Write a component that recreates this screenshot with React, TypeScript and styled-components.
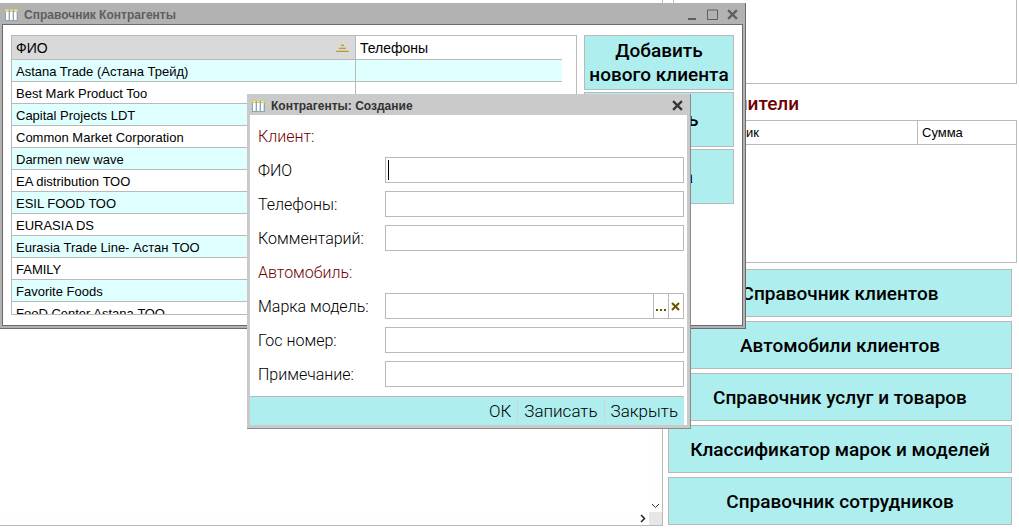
import React from 'react';
import styled, { createGlobalStyle } from 'styled-components';

const ui = '"Liberation Sans", Arial, sans-serif';
const light = 'Roboto, "Liberation Sans", sans-serif';
const line = '#b9b9b9';
const aqua = '#afeeee';

const GlobalStyle = createGlobalStyle`
  *, *::before, *::after { box-sizing: border-box; }
  body {
    margin: 0;
    background: #fff;
    color: #000;
    font-family: ${ui};
    font-size: 13px;
  }
  button, input { font: inherit; color: inherit; border-radius: 0; }
  button { padding: 0; }
`;

const Desktop = styled.div`
  position: relative;
  display: grid;
  grid-template-columns: minmax(0, 1fr) 356px;
  min-height: 100vh;
  padding-bottom: 3px;
  overflow: hidden;
`;

const Journal = styled.section`
  display: grid;
  grid-template-columns: minmax(0, 1fr) 13px;
  grid-template-rows: minmax(0, 1fr) 13px;
  border-right: 1px solid ${line};
  border-bottom: 1px solid ${line};
`;

const JournalBody = styled.div`
  grid-column: 1;
`;

const ScrollTrack = styled.div<{ $vertical?: boolean }>`
  display: flex;
  justify-content: flex-end;
  align-items: center;
  flex-direction: ${(p) => (p.$vertical ? 'column' : 'row')};
  background: #fefefe;
`;

const ScrollButton = styled.button`
  display: flex;
  align-items: center;
  justify-content: center;
  width: 13px;
  height: 13px;
  border: 0;
  background: transparent;
`;

const ScrollCorner = styled.div`
  background: #e6e6e6;
`;

const Side = styled.aside`
  display: flex;
  flex-direction: column;
  padding: 0 2px 0 5px;
`;

const EmptyPanel = styled.div`
  height: 84px;
  margin-left: 5px;
  border: 1px solid ${line};
  border-top: 0;
`;

const SideHeading = styled.h2`
  margin: 0 0 0 5px;
  padding: 4px 0 0 8px;
  font: 500 19px/32px ${light};
  color: #700000;
`;

const PanelTable = styled.div`
  height: 143px;
  margin: 0 0 6px 5px;
  border: 1px solid ${line};
`;

const Table = styled.table`
  width: 100%;
  table-layout: fixed;
  border-collapse: separate;
  border-spacing: 0;
`;

const PanelHead = styled.th<{ $w?: number }>`
  width: ${(p) => (p.$w ? `${p.$w}px` : 'auto')};
  height: 24px;
  padding: 0 4px;
  border-bottom: 1px solid ${line};
  font-weight: 400;
  text-align: left;

  & + & { border-left: 1px solid ${line}; }
`;

const Menu = styled.nav`
  display: flex;
  flex-direction: column;
  gap: 4px;
  margin-right: 5px;
`;

const ActionButton = styled.button<{ $tall?: boolean }>`
  height: ${(p) => (p.$tall ? 55 : 48)}px;
  padding-top: ${(p) => (p.$tall ? 0 : 2)}px;
  border: 1px solid ${line};
  background: ${aqua};
  font: 500 19px/24px ${light};
  white-space: nowrap;
`;

const ListWindow = styled.section`
  position: absolute;
  left: 0;
  top: 3px;
  width: 746px;
  padding: 0 2px 2px;
  border: solid #6b6b6b;
  border-width: 0 1px 1px 0;
  background: #b2b2b2;
`;

const Titlebar = styled.header<{ $active?: boolean }>`
  display: flex;
  align-items: center;
  height: 21px;
  padding: ${(p) => (p.$active ? '2px 0 0 2px' : '2px 1px 0 3px')};
  color: ${(p) => (p.$active ? '#333' : '#5e5e5e')};
`;

const Title = styled.h1`
  flex: 1;
  margin: 0 0 0 6px;
  font: 700 12px/18px ${ui};
`;

const WindowButton = styled.button`
  display: flex;
  align-items: center;
  justify-content: center;
  width: 20px;
  height: 18px;
  border: 0;
  background: transparent;
`;

const ListContent = styled.div`
  display: grid;
  grid-template-columns: minmax(0, 1fr) 150px;
  gap: 7px;
  height: 302px;
  padding: 10px 8px;
  border: 1px solid #6b6b6b;
  background: #fff;
`;

const ListFrame = styled.div`
  overflow: hidden;
  padding-right: 14px;
  border: 1px solid ${line};
`;

const ListHead = styled.th<{ $sorted?: boolean }>`
  width: ${(p) => (p.$sorted ? '343px' : 'auto')};
  height: 24px;
  padding: 0 4px;
  border-bottom: 1px solid ${line};
  background: ${(p) => (p.$sorted ? '#d9d9d9' : '#fff')};
  font-size: 14px;
  font-weight: 400;
  text-align: left;

  & + & { border-left: 1px solid ${line}; }
`;

const HeadLabel = styled.span`
  display: flex;
  align-items: center;
  justify-content: space-between;
  padding-right: 2px;
`;

const ListRow = styled.tr`
  &:nth-child(odd) { background: #e0ffff; }
`;

const ListCell = styled.td`
  height: 22px;
  padding: 2px 4px 0;
  border-bottom: 1px solid ${line};
  line-height: 19px;
  white-space: nowrap;

  & + & { border-left: 1px solid ${line}; }
`;

const ListActions = styled.div`
  display: flex;
  flex-direction: column;
  gap: 2px;
`;

const Dialog = styled.form`
  position: absolute;
  left: 247px;
  top: 94px;
  width: 444px;
  padding: 0 3px 3px;
  border: solid #8a8a8a;
  border-width: 0 1px 1px 0;
  background: #cacaca;
`;

const DialogContent = styled.div`
  padding: 4px 3px 0 0;
  background: #fff;
`;

const Fields = styled.div`
  display: grid;
  grid-auto-rows: 34px;
  align-items: center;
  padding: 0 0 5px 8px;
`;

const GroupTitle = styled.h2`
  margin: 0;
  padding-top: 2px;
  font: 300 16px/24px ${light};
  color: #700000;
`;

const FieldRow = styled.div`
  display: grid;
  grid-template-columns: 127px minmax(0, 1fr);
  align-items: center;
`;

const FieldLabel = styled.label`
  padding-top: 2px;
  font: 300 16px/24px ${light};
`;

const InputFrame = styled.div`
  display: flex;
  height: 26px;
  border: 1px solid ${line};
  background: #fff;
`;

const Input = styled.input`
  flex: 1;
  min-width: 0;
  padding: 0 2px;
  border: 0;
  outline: 0;
  background: transparent;
  font-size: 16px;
`;

const Caret = styled.span`
  width: 1px;
  margin: 2px 0 2px 2px;
  background: #000;
`;

const FieldButton = styled.button`
  display: flex;
  align-items: center;
  justify-content: center;
  width: 15px;
  border: 0;
  border-left: 1px solid ${line};
  background: #fff;
`;

const DialogFooter = styled.footer`
  display: flex;
  justify-content: flex-end;
  align-items: center;
  height: 29px;
  border-top: 1px solid ${line};
  background: ${aqua};
`;

const FooterButton = styled.button`
  height: 22px;
  padding: 0 6px;
  border: 0;
  background: transparent;
  font: 300 17px/22px ${light};

  & + & { border-left: 1px solid #d8d0d0; }
`;

const TableIcon = () => (
  <svg width="13" height="12" viewBox="0 0 13 12" aria-hidden="true">
    <path d="M0 1h13v11H0z" fill="#8ea3b4" />
    <path d="M1 3h3v8H1zM5 3h3v8H5zM9 3h3v8H9z" fill="#fff" />
    <path d="M3 3h1v8H3zM7 3h1v8H7zM11 3h1v8h-1z" fill="#cfe0ee" />
    <path d="M0 0h4v3H0zM5 0h3v3H5zM9 0h4v3H9z" fill="#d5cb70" />
    <path d="M1 1h2v1H1zM5 1h2v1H5zM9 1h3v1H9z" fill="#f4ecaa" />
  </svg>
);

const SortIcon = () => (
  <svg width="13" height="8" viewBox="0 0 13 8" aria-hidden="true">
    <path d="M5 0h3v1H5zM3 3h7v1H3zM1 6h11v1H1z" fill="#d8c878" />
    <path d="M5 1h3v1H5zM3 4h7v1H3zM0 7h13v1H0z" fill="#b09a4c" />
  </svg>
);

const CrossIcon = ({ size }: { size: number }) => (
  <svg width={size} height={size} viewBox="0 0 10 10" aria-hidden="true">
    <path d="M1 1l8 8M9 1l-8 8" stroke="currentColor" strokeWidth="2" fill="none" />
  </svg>
);

const clients = [
  'Astana Trade (Астана Трейд)',
  'Best Mark Product Too',
  'Capital Projects LDT',
  'Common Market Corporation',
  'Darmen new wave',
  'EA distribution ТОО',
  'ESIL FOOD ТОО',
  'EURASIA DS',
  'Eurasia Trade Line- Астан ТОО',
  'FAMILY',
  'Favorite Foods',
  'FooD Center Astana ТОО',
];

const menuItems = [
  'Справочник клиентов',
  'Автомобили клиентов',
  'Справочник услуг и товаров',
  'Классификатор марок и моделей',
  'Справочник сотрудников',
];

type FieldProps = { id: string; label: string; caret?: boolean; children?: React.ReactNode };

const Field = ({ id, label, caret, children }: FieldProps) => (
  <FieldRow>
    <FieldLabel htmlFor={id}>{label}</FieldLabel>
    <InputFrame>
      {caret && <Caret />}
      <Input id={id} type="text" />
      {children}
    </InputFrame>
  </FieldRow>
);

export default function App() {
  return (
    <>
      <GlobalStyle />
      <Desktop>
        <Journal>
          <JournalBody />
          <ScrollTrack $vertical>
            <ScrollButton type="button" aria-label="Вниз">
              <svg width="9" height="6" viewBox="0 0 9 6"><path d="M1 1l3.5 3.5L8 1" fill="none" stroke="#333" /></svg>
            </ScrollButton>
          </ScrollTrack>
          <ScrollTrack>
            <ScrollButton type="button" aria-label="Вправо">
              <svg width="6" height="9" viewBox="0 0 6 9"><path d="M1 1l3.5 3.5L1 8" fill="none" stroke="#222" strokeWidth="1.5" /></svg>
            </ScrollButton>
          </ScrollTrack>
          <ScrollCorner />
        </Journal>

        <Side>
          <EmptyPanel />
          <SideHeading>Исполнители</SideHeading>
          <PanelTable>
            <Table>
              <thead>
                <tr>
                  <PanelHead $w={24}>N</PanelHead>
                  <PanelHead>Работник</PanelHead>
                  <PanelHead $w={99}>Сумма</PanelHead>
                </tr>
              </thead>
            </Table>
          </PanelTable>
          <Menu>
            {menuItems.map((item) => (
              <ActionButton key={item} type="button">{item}</ActionButton>
            ))}
          </Menu>
        </Side>

        <ListWindow>
          <Titlebar>
            <TableIcon />
            <Title>Справочник Контрагенты</Title>
            <WindowButton type="button" aria-label="Свернуть">
              <svg width="10" height="10" viewBox="0 0 10 10"><path d="M1 9h8" stroke="currentColor" strokeWidth="2" /></svg>
            </WindowButton>
            <WindowButton type="button" aria-label="Развернуть">
              <svg width="11" height="11" viewBox="0 0 11 11"><path d="M.5 1h10v9.500h-10z" fill="none" stroke="currentColor" /></svg>
            </WindowButton>
            <WindowButton type="button" aria-label="Закрыть окно"><CrossIcon size={11} /></WindowButton>
          </Titlebar>
          <ListContent>
            <ListFrame>
              <Table>
                <thead>
                  <tr>
                    <ListHead $sorted><HeadLabel>ФИО<SortIcon /></HeadLabel></ListHead>
                    <ListHead>Телефоны</ListHead>
                  </tr>
                </thead>
                <tbody>
                  {clients.map((name) => (
                    <ListRow key={name}>
                      <ListCell>{name}</ListCell>
                      <ListCell />
                    </ListRow>
                  ))}
                </tbody>
              </Table>
            </ListFrame>
            <ListActions>
              <ActionButton type="button" $tall>Добавить<br />нового клиента</ActionButton>
              <ActionButton type="button" $tall>Открыть</ActionButton>
              <ActionButton type="button" $tall>Отмена</ActionButton>
            </ListActions>
          </ListContent>
        </ListWindow>

        <Dialog>
          <Titlebar $active>
            <TableIcon />
            <Title>Контрагенты: Создание</Title>
            <WindowButton type="button" aria-label="Закрыть окно"><CrossIcon size={11} /></WindowButton>
          </Titlebar>
          <DialogContent>
            <Fields>
              <GroupTitle>Клиент:</GroupTitle>
              <Field id="name" label="ФИО" caret />
              <Field id="phones" label="Телефоны:" />
              <Field id="comment" label="Комментарий:" />
              <GroupTitle>Автомобиль:</GroupTitle>
              <Field id="model" label="Марка модель:">
                <FieldButton type="button" aria-label="Выбрать">
                  <svg width="11" height="12" viewBox="0 0 11 12"><path d="M0 9h2v2H0zM4 9h2v2H4zM8 9h2v2H8z" fill="#6b5200" /></svg>
                </FieldButton>
                <FieldButton type="button" aria-label="Очистить">
                  <svg width="10" height="9" viewBox="0 0 10 9"><path d="M1 1l7 7M8 1L1 8" stroke="#6b5200" strokeWidth="2" /></svg>
                </FieldButton>
              </Field>
              <Field id="plate" label="Гос номер:" />
              <Field id="note" label="Примечание:" />
            </Fields>
            <DialogFooter>
              <FooterButton type="submit">ОК</FooterButton>
              <FooterButton type="button">Записать</FooterButton>
              <FooterButton type="button">Закрыть</FooterButton>
            </DialogFooter>
          </DialogContent>
        </Dialog>
      </Desktop>
    </>
  );
}
